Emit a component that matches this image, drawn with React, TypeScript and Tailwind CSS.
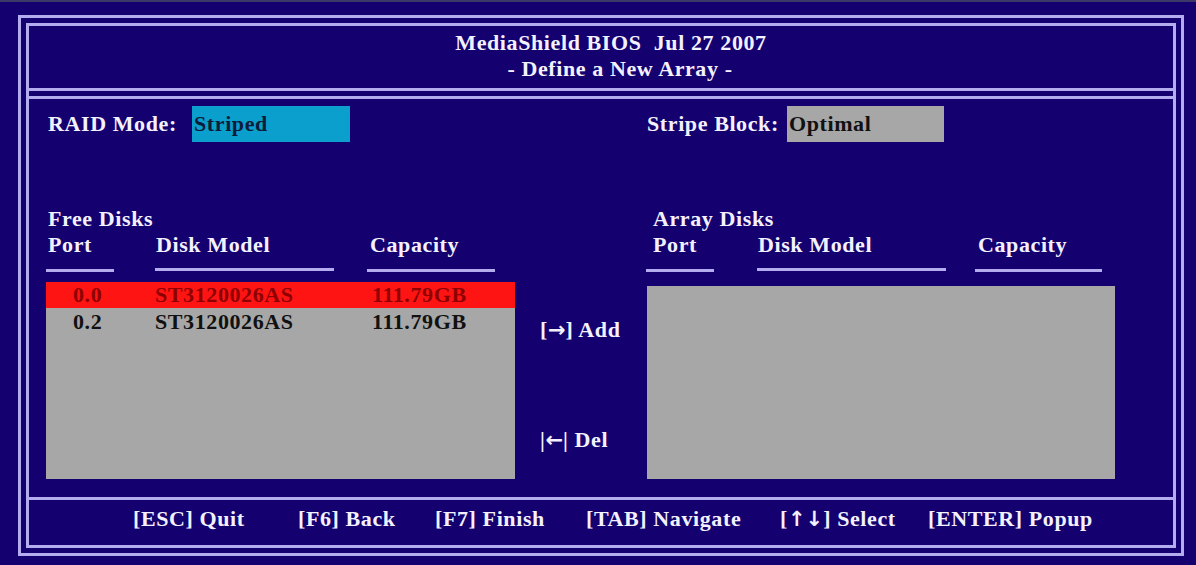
import React from "react";

type Disk = { port: string; model: string; capacity: string };

const freeDisks: Disk[] = [
  { port: "0.0", model: "ST3120026AS", capacity: "111.79GB" },
  { port: "0.2", model: "ST3120026AS", capacity: "111.79GB" },
];

const Arrow = ({ ch }: { ch: string }) => (
  <span className="font-['DejaVu_Sans',sans-serif] text-[21px] leading-[20px] tracking-normal">{ch}</span>
);

const keys = [
  { label: <>[ESC] Quit</>, w: "w-[165px]" },
  { label: <>[F6] Back</>, w: "w-[137px]" },
  { label: <>[F7] Finish</>, w: "w-[151px]" },
  { label: <>[TAB] Navigate</>, w: "w-[194px]" },
  { label: <>[<Arrow ch="↑↓" />] Select</>, w: "w-[148px]" },
  { label: <>[ENTER] Popup</>, w: "w-[180px]" },
];

function ColumnHeads({ right }: { right?: boolean }) {
  return (
    <div className="flex items-end">
      <div className={right ? "w-[68px] -ml-[1px]" : "w-[68px]"}>
        <div className={right ? "pl-[7px]" : "pl-[2px]"}>Port</div>
        <div className="h-[3px] bg-[#b3adf0] mt-[11px]" />
      </div>
      <div className={right ? "w-[189px] ml-[43px]" : "w-[179px] ml-[41px]"}>
        <div className="pl-[1px] whitespace-pre">Disk Model</div>
        <div className="h-[3px] bg-[#b3adf0] mt-[10px] mb-[1px]" />
      </div>
      <div className={right ? "w-[127px] ml-[29px]" : "w-[128px] ml-[33px]"}>
        <div className="pl-[3px]">Capacity</div>
        <div className="h-[3px] bg-[#b3adf0] mt-[11px]" />
      </div>
    </div>
  );
}

export default function App() {
  return (
    <div className="w-[1196px] h-[565px] bg-[#14006f] border-t-2 border-[#3c3868] pt-[13px] pl-[18px] font-['Liberation_Serif',serif] font-bold text-[22px] leading-[26px] tracking-[0.6px] text-[#f3f1ff] overflow-hidden">
      <div className="w-[1166px] h-[541px] border-[3px] border-[#b3adf0] p-[5px]">
        <div className="h-full border-[3px] border-[#b3adf0] flex flex-col">
          {/* title */}
          <div className="h-[62px] pt-[4px] flex flex-col items-center">
            <div className="pl-[20px] whitespace-pre">MediaShield BIOS  Jul 27 2007</div>
            <div className="pl-[38px] whitespace-pre">- Define a New Array -</div>
          </div>
          <div className="h-[3px] bg-[#b3adf0]" />
          <div className="h-[5px]" />
          <div className="h-[3px] bg-[#b3adf0]" />

          {/* body */}
          <div className="h-[398px] flex pl-[17px]">
            <div className="w-[469px] pt-[7px]">
              <div className="flex items-center h-[36px]">
                <span className="pl-[2px] w-[146px]">RAID Mode:</span>
                <div className="w-[158px] h-[36px] bg-[#0b9fcd] text-[#0b1b3a] pl-[2px] flex items-center">Striped</div>
              </div>
              <div className="mt-[64px] pl-[2px]">Free Disks</div>
              <ColumnHeads />
              <div className="mt-[10px] h-[197px] bg-[#a7a7a7] text-[#111]">
                {freeDisks.map((d, i) => (
                  <div key={d.port} className={i === 0 ? "flex h-[26px] bg-[#ff1414] text-[#8e0000]" : "flex h-[26px] mt-[1px]"}>
                    <span className="w-[109px] pl-[27px]">{d.port}</span>
                    <span className="w-[217px]">{d.model}</span>
                    <span>{d.capacity}</span>
                  </div>
                ))}
              </div>
            </div>

            <div className="w-[132px] pl-[25px] pt-[218px]">
              <div>[<Arrow ch="→" />] Add</div>
              <div className="mt-[84px]">|<Arrow ch="←" />| Del</div>
            </div>

            <div className="w-[468px] pt-[7px]">
              <div className="flex items-center h-[36px]">
                <span className="w-[140px]">Stripe Block:</span>
                <div className="w-[157px] h-[36px] bg-[#a7a7a7] text-[#111] pl-[2px] flex items-center">Optimal</div>
              </div>
              <div className="mt-[64px] pl-[6px]">Array Disks</div>
              <ColumnHeads right />
              <div className="mt-[14px] h-[193px] bg-[#a7a7a7]" />
            </div>
          </div>

          {/* key hints */}
          <div className="h-[3px] bg-[#b3adf0]" />
          <div className="flex pl-[104px] pt-[6px]">
            {keys.map((k, i) => (
              <span key={i} className={k.w + " whitespace-pre"}>
                {k.label}
              </span>
            ))}
          </div>
        </div>
      </div>
    </div>
  );
}
